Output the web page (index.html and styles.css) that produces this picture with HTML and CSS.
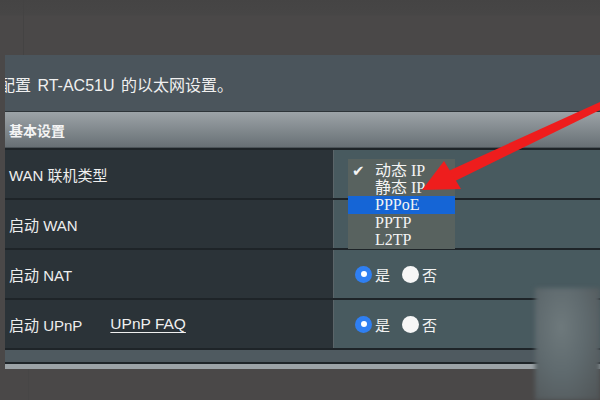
FILE: index.html
```html
<!DOCTYPE html>
<html>
<head>
<meta charset="utf-8">
<link rel="stylesheet" href="styles.css">
</head>
<body>
<div class="page">
  <div class="top"><div class="top-line"></div></div>
  <div class="panel">
    <div class="intro"><span class="intro-text">配置 RT-AC51U 的以太网设置。</span></div>
    <div class="section-head">基本设置</div>
    <div class="row">
      <div class="label">WAN 联机类型</div>
      <div class="value"></div>
    </div>
    <div class="row">
      <div class="label">启动 WAN</div>
      <div class="value"></div>
    </div>
    <div class="row">
      <div class="label">启动 NAT</div>
      <div class="value">
        <span class="radio on"></span><span class="opt">是</span>
        <span class="radio off"></span><span class="opt">否</span>
      </div>
    </div>
    <div class="row">
      <div class="label">启动 UPnP <a class="faq">UPnP FAQ</a></div>
      <div class="value">
        <span class="radio on"></span><span class="opt">是</span>
        <span class="radio off"></span><span class="opt">否</span>
      </div>
    </div>
    <div class="foot"></div>
    <div class="foot-light"></div>
  </div>
  <div class="bottom"><div class="bottom-line"></div></div>

  <ul class="menu">
    <li><span class="check">✔</span>动态 IP</li>
    <li>静态 IP</li>
    <li class="sel">PPPoE</li>
    <li>PPTP</li>
    <li>L2TP</li>
  </ul>

  <div class="watermark"></div>

  <svg class="arrow" width="600" height="400" viewBox="0 0 600 400">
    <polygon points="600,102 600,110 449,184 444,173" fill="#ee1d1d"/>
    <polygon points="422,190 444,161 461,189" fill="#ee1d1d"/>
  </svg>
</div>
</body>
</html>
```
FILE: styles.css
```css
html, body {
  margin: 0;
  padding: 0;
}
body {
  background: #4a4848;
  font-family: "Liberation Sans", "Noto Sans CJK SC", sans-serif;
  color: #ececec;
}
.page {
  position: relative;
  width: 600px;
  height: 400px;
  overflow: hidden;
  background: #4a4848;
}
.top {
  height: 55px;
  display: flex;
  background: linear-gradient(#454444 0, #474646 15px, #4a4848 16px);
}
.top-line {
  width: 1px;
  margin-left: 23px;
  background: #444343;
}
.panel {
  margin-left: 5px;
  overflow: hidden;
}
.intro {
  height: 57px;
  background: #4b555c;
  display: flex;
  align-items: center;
  padding-top: 2px;
  box-sizing: border-box;
  border-bottom: 1px solid #2d3438;
}
.intro-text {
  margin-left: -6px;
  font-size: 16px;
  word-spacing: 2px;
  color: #f0f0f0;
  white-space: nowrap;
}
.section-head {
  height: 36px;
  box-sizing: border-box;
  background: linear-gradient(#9ca3a7, #687075);
  display: flex;
  align-items: center;
  padding-left: 4px;
  font-size: 14px;
  font-weight: bold;
  color: #f4f4f4;
  border-bottom: 1px solid #4c5459;
}
.row {
  display: flex;
  height: 50px;
  box-sizing: border-box;
  border-top: 2px solid #1e2428;
}
.row:nth-of-type(2) {
  height: 51px;
}
.label {
  width: 329px;
  background: #2b3338;
  border-right: 1px solid #5b6569;
  display: flex;
  align-items: center;
  padding-left: 4px;
  box-sizing: border-box;
  font-size: 15px;
  color: #eeeeee;
  white-space: nowrap;
}
.faq {
  margin-left: 28px;
  font-size: 15.5px;
  text-decoration: underline;
  text-underline-offset: 3px;
  color: #f0f0f0;
}
.value {
  flex: 1;
  background: #485a5f;
  display: flex;
  align-items: center;
  padding-left: 21px;
  font-size: 15px;
}
.radio {
  width: 17px;
  height: 17px;
  border-radius: 50%;
  box-sizing: border-box;
  display: inline-flex;
  align-items: center;
  justify-content: center;
}
.radio.on {
  background: #2f7ff2;
}
.radio.on::after {
  content: "";
  width: 6px;
  height: 6px;
  border-radius: 50%;
  background: #ffffff;
}
.radio.off {
  background: #f6f6f6;
  margin-left: 12px;
}
.opt {
  margin-left: 3px;
  color: #f2f2f2;
  font-size: 15px;
}
.foot {
  height: 16px;
  box-sizing: border-box;
  background: #4f5a60;
  border-top: 2px solid #1e2428;
  border-bottom: 2px solid #1e2428;
}
.foot-light {
  height: 5px;
  background: #9ca3a7;
}
.bottom {
  height: 40px;
  display: flex;
}
.bottom-line {
  width: 1px;
  margin-left: 28px;
  background: #474646;
}
.menu {
  position: absolute;
  left: 348px;
  top: 159px;
  width: 107px;
  height: 90px;
  margin: 0;
  padding: 3px 0 0 0;
  box-sizing: border-box;
  list-style: none;
  background: #58625f;
  font-family: "Liberation Serif", "Noto Sans CJK SC", serif;
  font-size: 16px;
  color: #f4f4f4;
  overflow: hidden;
}
.menu li {
  height: 17.2px;
  line-height: 17.2px;
  padding-left: 27px;
  position: relative;
  white-space: nowrap;
}
.menu li.sel {
  background: #1565d6;
}
.check {
  position: absolute;
  left: 4px;
  top: 1px;
  font-family: "DejaVu Sans", sans-serif;
  font-size: 15px;
}
.watermark {
  position: absolute;
  left: 535px;
  top: 288px;
  width: 65px;
  height: 112px;
  background: radial-gradient(ellipse at 40% 35%, #6e797c 0%, #5f6a6e 45%, #4f5456 100%);
  filter: blur(2px);
}
.arrow {
  position: absolute;
  left: 0;
  top: 0;
}
```
